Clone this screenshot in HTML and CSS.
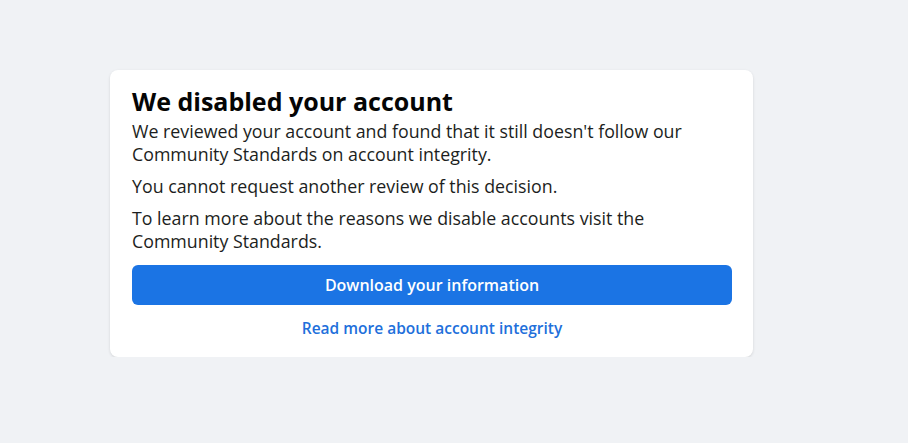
FILE: index.html
```html
<!DOCTYPE html>
<html lang="en">
<head>
    <meta charset="UTF-8">
    <meta name="viewport" content="width=device-width, initial-scale=1.0">
    <title>Account disabled</title>

    <link rel="stylesheet" href="styles.css">
</head>
<body>
    <div class="page">
        <div class="card">
            <h1>We disabled your account</h1>
            <p>We reviewed your account and found that it still doesn't follow our Community Standards on account integrity.</p>
            <p>You cannot request another review of this decision.</p>
            <p>To learn more about the reasons we disable accounts visit the Community Standards.</p>

            <button class="primary" type="button">Download your information</button>
            <a class="more" href="#">Read more about account integrity</a>
        </div>
    </div>
</body>
</html>
```

FILE: styles.css
```css
body {
    margin: 0;
    padding: 0;
    font-family: "Open Sans", "Noto Sans", sans-serif;
    color: #1c1e21;
    background: #f0f2f5;
}

.page {
    padding: 70px 0 0 110px;
}

.card {
    width: 600px;
    padding: 16px 21px 19px 22px;
    background: #fff;
    border-radius: 8px;
    box-shadow: 0 1px 3px rgba(0, 0, 0, 0.12);
    display: flex;
    flex-direction: column;
}

h1 {
    margin: 0 0 4px;
    font-size: 25px;
    font-weight: 700;
    line-height: 30px;
    color: #050505;
}

.card p {
    margin: 0 0 9px;
    font-size: 17.8px;
    line-height: 23px;
}

.primary {
    margin-top: 3px;
    height: 40px;
    border: none;
    border-radius: 6px;
    background: #1b74e4;
    color: #fff;
    font-family: inherit;
    font-size: 16px;
    font-weight: 600;
    cursor: pointer;
}

.more {
    margin-top: 13px;
    align-self: center;
    font-size: 15.5px;
    font-weight: 600;
    line-height: 20px;
    color: #216fdb;
    text-decoration: none;
}
```
